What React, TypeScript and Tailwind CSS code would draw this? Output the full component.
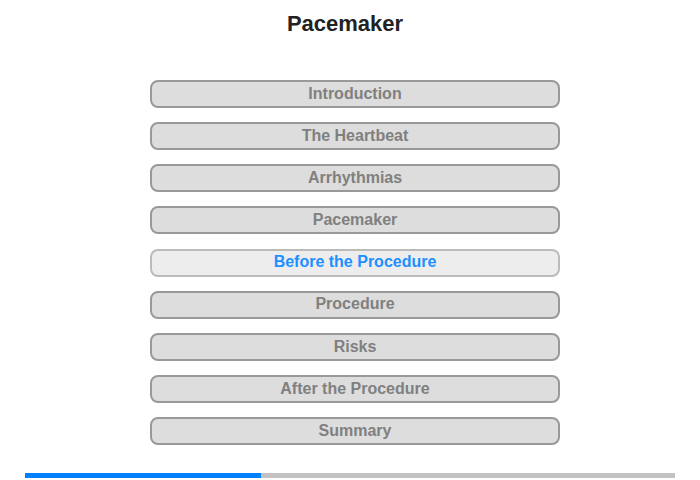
import React from 'react';

const sections = [
  'Introduction',
  'The Heartbeat',
  'Arrhythmias',
  'Pacemaker',
  'Before the Procedure',
  'Procedure',
  'Risks',
  'After the Procedure',
  'Summary',
];

const activeIndex = 4;

const App = () => {
  return (
    <div className="w-[700px] h-[480px] bg-white flex flex-col items-center font-['Liberation_Sans',Arial,sans-serif]">
      <h1 className="mt-[11px] mr-[10px] h-[26px] leading-[26px] text-[22px] font-bold text-[#222222]">
        Pacemaker
      </h1>

      {/* Chapter menu */}
      <div className="mt-[43px] ml-[10px] w-[410px] flex flex-col gap-[14.13px]">
        {sections.map((title, i) => {
          const active = i === activeIndex;
          return (
            <div
              key={title}
              className={
                active
                  ? 'h-[28px] rounded-[8px] border-2 border-[#bbbbbb] bg-[#ededed] flex items-center justify-center text-[16px] font-bold text-[#1e90ff]'
                  : 'h-[28px] rounded-[8px] border-2 border-[#999999] bg-[#dddddd] flex items-center justify-center text-[16px] font-bold text-[#808080]'
              }
            >
              <span className="-mt-[0.5px]">{title}</span>
            </div>
          );
        })}
      </div>

      {/* Progress */}
      <div className="mt-auto mb-[2px] w-[650px] h-[5px] bg-[#c2c2c2] flex">
        <div className="h-full bg-[#0080ff]" style={{ width: `${(236 / 650) * 100}%` }} />
      </div>
    </div>
  );
};

export default App;
